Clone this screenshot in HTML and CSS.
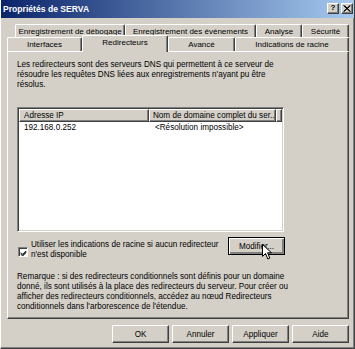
FILE: index.html
```html
<!DOCTYPE html>
<html lang="fr">
<head>
	<meta charset="UTF-8">
	<title>Propriétés de SERVA</title>
	<link rel="stylesheet" href="styles.css">
</head>
<body>
<div class="window">
	<!-- barre de titre -->
	<div class="titlebar">
		<span class="title">Propriétés de SERVA</span>
		<span class="tb-btns">
			<span class="tb-btn help">?</span>
			<span class="tb-btn close"><svg width="8" height="7" viewBox="0 0 8 7"><path d="M0.5 0.5 L7 6.5 M1.5 0.5 L7.5 6.5 M7 0.5 L0.5 6.5 M7.5 0.5 L1 6.5" stroke="#000" stroke-width="1"/></svg></span>
		</span>
	</div>

	<div class="content">
		<!-- onglets -->
		<div class="tabs">
			<div class="tabrow back">
				<div class="tab t-debug">Enregistrement de débogage</div>
				<div class="tab t-events">Enregistrement des événements</div>
				<div class="tab t-analyse">Analyse</div>
				<div class="tab t-secu">Sécurité</div>
			</div>
			<div class="tabrow front">
				<div class="tab t-iface">Interfaces</div>
				<div class="tab t-redir active">Redirecteurs</div>
				<div class="tab t-avance">Avancé</div>
				<div class="tab t-racine">Indications de racine</div>
			</div>
		</div>

		<div class="panel">
			<div class="pane">
				<p class="intro">Les redirecteurs sont des serveurs DNS qui permettent à ce serveur de<br>résoudre les requêtes DNS liées aux enregistrements n'ayant pu être<br>résolus.</p>

				<div class="listview">
					<div class="lv-head">
						<div class="col c1">Adresse IP</div>
						<div class="col c2">Nom de domaine complet du ser...</div>
						<div class="col c3"></div>
					</div>
					<div class="lv-row">
						<span class="c1">192.168.0.252</span>
						<span class="c2">&lt;Résolution impossible&gt;</span>
					</div>
				</div>

				<div class="options">
					<label class="check">
						<span class="box"><svg width="8" height="8" viewBox="0 0 8 8"><path d="M1 3.5 L3 5.5 L7 1.5 M1 4.5 L3 6.5 L7 2.5 M1 5.5 L3 7.5 L7 3.5" stroke="#000" stroke-width="1" fill="none"/></svg></span>
						<span class="check-text">Utiliser les indications de racine si aucun redirecteur<br>n'est disponible</span>
					</label>
					<div class="btn-wrap">
						<button class="btn focus">Modifier...</button>
						<svg class="cursor" width="11" height="17" viewBox="0 0 11 17"><path d="M0.5 0.5 V12.5 L3.5 9.5 L5.8 15 L7.8 14.1 L5.6 8.8 H9.5 Z" fill="#fff" stroke="#000" stroke-width="1"/></svg>
					</div>
				</div>

				<p class="note">Remarque : si des redirecteurs conditionnels sont définis pour un domaine<br>donné, ils sont utilisés à la place des redirecteurs du serveur. Pour créer ou<br>afficher des redirecteurs conditionnels, accédez au nœud Redirecteurs<br>conditionnels dans l'arborescence de l'étendue.</p>
			</div>
		</div>

		<!-- boutons du bas -->
		<div class="footer">
			<button class="btn">OK</button>
			<button class="btn">Annuler</button>
			<button class="btn">Appliquer</button>
			<button class="btn">Aide</button>
		</div>
	</div>
</div>
</body>
</html>
```

FILE: styles.css
```css
*{
	margin:0;
	padding:0;
	box-sizing: border-box;
}
body{
	background-color: #d4d0c8;
	font-family: "Liberation Sans", Arial, sans-serif;
	font-size: 8.15px;
	color: #000;
}
.window{
	width: 355px;
	height: 349px;
	background-color: #d4d0c8;
	border-left: 1px solid #fff;
	border-right: 1px solid #404040;
	border-bottom: 1px solid #404040;
	box-shadow: inset -1px -1px #808080;
}
/* barre de titre */
.titlebar{
	height: 18px;
	display: flex;
	align-items: center;
	justify-content: space-between;
	padding: 0 1px 0 2px;
	background: linear-gradient(to right, #0a246a, #a6caf0);
}
.title{
	color: #fff;
	font-weight: bold;
	font-size: 8.6px;
	margin-top: -1px;
}
.tb-btns{
	display: flex;
	gap: 1px;
	margin-top: -2px;
}
.tb-btn{
	width: 12px;
	height: 11px;
	background-color: #d4d0c8;
	border-top: 1px solid #fff;
	border-left: 1px solid #fff;
	border-right: 1px solid #404040;
	border-bottom: 1px solid #404040;
	box-shadow: inset -1px -1px #808080;
	display: flex;
	align-items: center;
	justify-content: center;
	font-weight: bold;
	font-size: 8px;
	line-height: 1;
}
.tb-btn.close{
	margin-left: 1px;
}
.content{
	padding: 6px 5px 0 6px;
}
/* onglets */
.tabs{
	height: 27px;
}
.tabrow{
	display: flex;
	align-items: flex-end;
}
.tabrow.back{
	height: 13px;
	margin-left: 8px;
}
.tabrow.front{
	height: 14px;
}
.tab{
	height: 100%;
	text-align: center;
	font-size: 8px;
	line-height: 13px;
	background-color: #d4d0c8;
	border-top: 1px solid #fff;
	border-left: 1px solid #fff;
	border-right: 1px solid #404040;
	box-shadow: inset -1px 0 #808080;
	border-radius: 2px 2px 0 0;
	white-space: nowrap;
	overflow: hidden;
}
.tabrow.front .tab.active{
	height: 17px;
	margin-bottom: -1px;
	position: relative;
	z-index: 1;
}
.t-debug{ width: 110px; }
.t-events{ width: 131px; }
.t-analyse{ width: 46px; }
.t-secu{ width: 47px; }
.t-iface{ width: 75px; }
.t-redir{ width: 86px; }
.t-avance{ width: 67px; }
.t-racine{ width: 114px; }
/* panneau */
.panel{
	width: 342px;
	height: 268px;
	border-top: 1px solid #fff;
	border-left: 1px solid #fff;
	border-right: 1px solid #404040;
	border-bottom: 1px solid #404040;
	box-shadow: inset -1px -1px #808080;
	padding: 8px 0 0 9px;
}
.pane{
	width: 268px;
}
.intro, .note, .check-text{
	line-height: 10px;
	white-space: nowrap;
}
.listview{
	width: 267px;
	height: 125px;
	margin-top: 17px;
	background-color: #fff;
	border: 1px solid;
	border-color: #808080 #fff #fff #808080;
	box-shadow: inset 1px 1px #404040, inset -1px -1px #d4d0c8;
	padding: 1px;
}
.lv-head{
	display: flex;
	height: 13px;
}
.col{
	height: 13px;
	line-height: 12px;
	background-color: #d4d0c8;
	border-top: 1px solid #fff;
	border-left: 1px solid #fff;
	border-right: 1px solid #404040;
	border-bottom: 1px solid #404040;
	box-shadow: inset -1px -1px #808080;
	padding-left: 4px;
	white-space: nowrap;
	overflow: hidden;
}
.col.c1{ width: 132px; }
.col.c2{ width: 129px; padding-left: 3px; }
.col.c3{ flex: 1; }
.lv-row{
	display: flex;
	line-height: 10px;
	margin-top: 1px;
}
.lv-row .c1{
	width: 132px;
	padding-left: 5px;
}
.lv-row .c2{
	padding-left: 4px;
}
/* case a cocher + bouton */
.options{
	display: flex;
	justify-content: space-between;
	align-items: flex-start;
	margin-top: 5px;
}
.check{
	display: flex;
	align-items: flex-start;
	padding-top: 3px;
}
.box{
	width: 10px;
	height: 10px;
	margin: 7px 3px 0 1px;
	background-color: #fff;
	border: 1px solid;
	border-color: #808080 #fff #fff #808080;
	box-shadow: inset 1px 1px #404040;
	display: flex;
	align-items: center;
	justify-content: center;
	padding: 1px 0 0 1px;
}
.btn-wrap{
	position: relative;
}
.btn{
	width: 57px;
	height: 18px;
	font-family: "Liberation Sans", Arial, sans-serif;
	font-size: 8.15px;
	color: #000;
	background-color: #d4d0c8;
	border-top: 1px solid #fff;
	border-left: 1px solid #fff;
	border-right: 1px solid #404040;
	border-bottom: 1px solid #404040;
	box-shadow: inset -1px -1px #808080;
}
.btn.focus{
	border: 1px solid #000;
	box-shadow: inset 1px 1px #fff, inset -2px -2px #808080;
}
.cursor{
	position: absolute;
	left: 34px;
	top: 7px;
}
.note{
	margin-top: 12px;
}
.footer{
	display: flex;
	justify-content: flex-end;
	gap: 3px;
	margin-top: 6px;
	width: 342px;
}
```
